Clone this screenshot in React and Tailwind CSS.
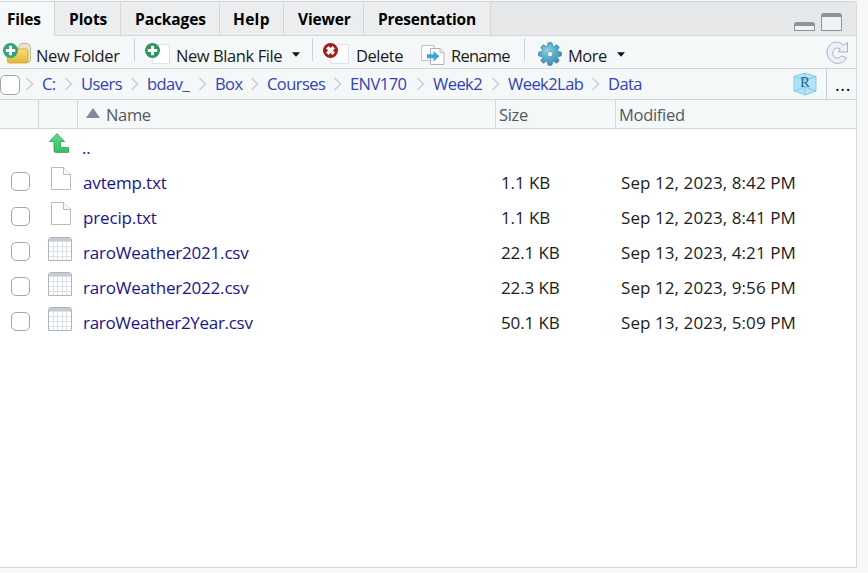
import React from "react";

const TABS = [
  { label: "Files", box: "w-[55px] pl-[7px] bg-[#f4f8f9]", track: "tracking-[-0.2px]", active: true },
  { label: "Plots", box: "w-[66px] pl-[14px] bg-[#ebedef]", track: "tracking-[-0.05px]" },
  { label: "Packages", box: "w-[99px] pl-[14px] bg-[#ebedef]", track: "tracking-[-0.1px]" },
  { label: "Help", box: "w-[64px] pl-[13px] bg-[#ebedef]", track: "tracking-[0.3px]" },
  { label: "Viewer", box: "w-[80px] pl-[14px] bg-[#ebedef]", track: "tracking-[-0.15px]" },
  { label: "Presentation", box: "w-[127px] pl-[14px] bg-[#ebedef]", track: "tracking-[-0.2px]" },
];

const CRUMBS = [
  { label: "C:", box: "w-[31px]" },
  { label: "Users", box: "w-[58px]" },
  { label: "bdav_", box: "w-[60px]" },
  { label: "Box", box: "w-[44px]" },
  { label: "Courses", box: "w-[75px]" },
  { label: "ENV170", box: "w-[75px]" },
  { label: "Week2", box: "w-[67px]" },
  { label: "Week2Lab", box: "w-[92px]" },
  { label: "Data", box: "w-[51px]" },
];

const FILES = [
  { name: "avtemp.txt", size: "1.1 KB", date: "Sep 12, 2023, 8:42 PM", kind: "txt", track: "tracking-[-0.15px]" },
  { name: "precip.txt", size: "1.1 KB", date: "Sep 12, 2023, 8:41 PM", kind: "txt", track: "tracking-[-0.15px]" },
  { name: "raroWeather2021.csv", size: "22.1 KB", date: "Sep 13, 2023, 4:21 PM", kind: "csv", track: "tracking-[-0.2px]" },
  { name: "raroWeather2022.csv", size: "22.3 KB", date: "Sep 12, 2023, 9:56 PM", kind: "csv", track: "tracking-[-0.2px]" },
  { name: "raroWeather2Year.csv", size: "50.1 KB", date: "Sep 13, 2023, 5:09 PM", kind: "csv", track: "tracking-[-0.3px]" },
];

function Caret({ className }) {
  return (
    <svg className={`shrink-0 ${className}`} width="8" height="5" viewBox="0 0 8 5">
      <path d="M0 .3H8L4 4.7Z" fill="#111" />
    </svg>
  );
}

function Separator() {
  return <div className="mb-[5px] h-[23px] w-px shrink-0 bg-[#cdd2d6]" />;
}

function NewFolderIcon() {
  return (
    <svg className="shrink-0" width="28" height="21" viewBox="0 0 28 21">
      <defs>
        <linearGradient id="folder" x1="0" y1="0" x2="0" y2="1">
          <stop offset="0" stopColor="#f9e07a" />
          <stop offset="1" stopColor="#e5b52f" />
        </linearGradient>
      </defs>
      <path d="M15 5 17 1.2Q17.500.5 18.500.5H24.500Q27.500 1.500 27.500 4.500V18L25 20Z" fill="#e8e2ce" stroke="#b9ad86" strokeWidth=".8" />
      <path d="M4.500 8Q4.500 6 6.500 6H22.500Q24.800 6 24.800 8V18.500Q24.800 20 23 20H6Q4.500 20 4.500 18.500Z" fill="url(#folder)" stroke="#caa23c" strokeWidth=".8" />
      <circle cx="7.500" cy="7.500" r="7.500" fill="#36a07c" />
      <path d="M6 2.800h3v3.200h3.200v3H9v3.200H6V9H2.800V6H6Z" fill="#fff" />
    </svg>
  );
}

function NewFileIcon() {
  return (
    <svg className="shrink-0" width="26" height="21" viewBox="0 0 26 21">
      <path d="M7.500 1.500H24.500V20.500H7.500Z" fill="#fff" stroke="#e0e3e6" />
      <circle cx="7.500" cy="7.500" r="7.500" fill="#2f955c" />
      <path d="M6 2.800h3v3.200h3.200v3H9v3.200H6V9H2.800V6H6Z" fill="#fff" />
    </svg>
  );
}

function DeleteIcon() {
  return (
    <svg className="shrink-0" width="26" height="21" viewBox="0 0 26 21">
      <path d="M7.500 1.500H25.500V20.500H7.500Z" fill="#fbfcfd" stroke="#e0e3e6" />
      <circle cx="7.500" cy="7.500" r="7.500" fill="#a51d18" />
      <path d="m4.300 4.300 6.400 6.400m0-6.400-6.400 6.400" stroke="#fff" strokeWidth="3.400" />
    </svg>
  );
}

function RenameIcon() {
  return (
    <svg className="shrink-0" width="24" height="20" viewBox="0 0 24 20">
      <path d="M.5.5h13v15H.5Z" fill="#fdfdfd" stroke="#c0c4c7" />
      <path d="M9.500 3.500h9.500l4 4v12H9.500Z" fill="#fff" stroke="#aeb2b5" />
      <path d="M19 3.500v4h4" fill="#eee" stroke="#bbb" />
      <path d="M6 9.200h6.500V6l5.800 5.300-5.800 5.200v-3.200H6Z" fill="#36a5e6" />
    </svg>
  );
}

function GearIcon() {
  return (
    <svg className="shrink-0" width="24" height="24" viewBox="-12 -12 24 24">
      <defs>
        <radialGradient id="gear" cx=".4" cy=".35" r=".7">
          <stop offset="0" stopColor="#8fd3ec" />
          <stop offset=".5" stopColor="#58abcd" />
          <stop offset="1" stopColor="#3c86a8" />
        </radialGradient>
      </defs>
      <path
        d="M-1.800-11.300H1.800L2.800-7.600 3.600-7.200 6.800-9.200 9.200-6.800 7.200-3.600 7.600-2.800 11.400-1.800V1.800L7.600 2.800 7.200 3.600 9.200 6.800 6.800 9.200 3.600 7.200 2.800 7.600 1.800 11.300H-1.800L-2.800 7.600-3.600 7.200-6.800 9.200-9.200 6.800-7.200 3.600-7.600 2.800-11.400 1.800V-1.800L-7.600-2.800-7.200-3.600-9.200-6.800-6.800-9.200-3.600-7.200-2.800-7.600Z"
        fill="url(#gear)"
        stroke="#4a8dab"
        strokeWidth=".9"
        strokeLinejoin="round"
      />
      <circle r="2.800" fill="#f4f8f9" stroke="#5a9cba" strokeWidth=".9" />
    </svg>
  );
}

function RefreshIcon() {
  return (
    <svg className="shrink-0" width="23" height="24" viewBox="0 0 23 24">
      <path
        d="M17.300 4.200 21.500 1.500V11H12.300L14.500 8C10.500 5.500 6.800 8.200 6.800 12.300C6.800 17.800 13 18.500 15.500 14.800L20.500 16.800C17.500 23 9.800 24 5.200 20C-.8 15-.2 6.500 5.500 2.700C9.300.2 14.300.7 17.300 4.200Z"
        fill="#edf0f9"
        stroke="#a9afc8"
        strokeLinejoin="round"
      />
    </svg>
  );
}

function ProjectIcon() {
  return (
    <svg className="shrink-0" width="24" height="24" viewBox="0 0 24 24">
      <path d="M12 1 23 4.500V19L12 23 1 19V4.500Z" fill="#b5e6f8" stroke="#78bdd6" strokeWidth=".8" />
      <path d="M1 4.500 12 8 23 4.500M12 8V23M1 19 12 15 23 19M12 1V8" fill="none" stroke="#72bddb" strokeWidth=".8" />
      <path d="M1 4.500 12 8V23L1 19Z" fill="#9bdcf4" opacity=".4" />
      <text x="12" y="15" textAnchor="middle" fontSize="15" fontWeight="400" fontFamily="Liberation Serif, serif" fill="#2a5f93">
        R
      </text>
    </svg>
  );
}

function UpIcon() {
  return (
    <svg className="shrink-0" width="21" height="20" viewBox="0 0 21 20">
      <defs>
        <linearGradient id="up" x1="0" y1="0" x2="0" y2="1">
          <stop offset="0" stopColor="#63d98c" />
          <stop offset="1" stopColor="#38bd68" />
        </linearGradient>
      </defs>
      <path d="M8 .6 15.500 8.500H11.500V14.500H19.500V19.400H7Q5 19.400 5 17.500V8.500H.6Z" fill="url(#up)" stroke="#35a75d" strokeWidth=".9" strokeLinejoin="round" />
    </svg>
  );
}

function TextFileIcon() {
  return (
    <svg className="shrink-0" width="24" height="24" viewBox="0 0 24 24">
      <path d="M3.500.5H15.500L22.500 7.500V22.500H3.500Z" fill="#fff" stroke="#b8babd" />
      <path d="M15.500.5V7.500H22.500" fill="#fafafa" stroke="#b8babd" />
    </svg>
  );
}

function TableFileIcon() {
  return (
    <svg className="shrink-0" width="24" height="24" viewBox="0 0 24 24">
      <path d="M.5 23.500V3Q.5.5 3 .5H21Q23.500.5 23.500 3V23.500Z" fill="#fff" stroke="#aeb4bc" />
      <path d="M1 4V3Q1 1 3 1H21Q23 1 23 3V4Z" fill="#c6ccd5" />
      <path d="M1 4.500H23M1 9.500H23M1 14.500H23M1 19.500H23M5.500 4V23M9.500 4V23M14.500 4V23M18.500 4V23" stroke="#dbe0e8" />
    </svg>
  );
}

function Checkbox({ className }) {
  return <div className={`shrink-0 rounded-[5px] border border-[#a4a6a8] bg-white ${className}`} />;
}

export default function App() {
  return (
    <div className="h-[573px] w-[868px] overflow-hidden bg-[#f5f7f9] pt-px font-['Open_Sans','Noto_Sans',sans-serif] text-[16.5px] leading-[20px] text-[#1c1c1c]">
      <div className="flex h-[567px] w-[857px] flex-col overflow-hidden rounded-tr-[4px] border-t border-r border-b border-[#d3d7da] bg-white">
        <div className="flex h-[34px] shrink-0 bg-[#e5e7e9] text-[15.5px] font-bold text-black">
          {TABS.map((t) => (
            <div
              key={t.label}
              className={`flex shrink-0 items-center border-r border-r-[#d3d7da] border-b whitespace-nowrap ${t.active ? "border-b-[#f4f8f9]" : "border-b-[#d3d7da]"} ${t.box} ${t.track}`}
            >
              {t.label}
            </div>
          ))}
          <div className="flex flex-1 items-end justify-end gap-[6px] border-b border-[#d3d7da] pr-[14px] pb-[4px]">
            <div className="h-[9px] w-[21px] rounded-t-[3px] border border-t-4 border-[#8d9396] bg-[#eff1f2]" />
            <div className="h-[18px] w-[21px] rounded-t-[3px] border border-t-4 border-[#8d9396] bg-[#eff1f2]" />
          </div>
        </div>

        <div className="flex h-[33px] shrink-0 items-center border-b border-[#d3d7da] bg-[#f4f8f9] pl-[3px] whitespace-nowrap">
          <div className="mt-[3px]">
            <NewFolderIcon />
          </div>
          <span className="mt-[7px] w-[103px] shrink-0 pl-[5px] tracking-[-0.4px]">New Folder</span>
          <Separator />
          <div className="w-[10px]" />
          <div className="mt-[2px]">
            <NewFileIcon />
          </div>
          <span className="mt-[7px] w-[121px] shrink-0 pl-[5px] tracking-[-0.42px]">New Blank File</span>
          <Caret className="mt-[5px] mr-[12px]" />
          <Separator />
          <div className="w-[10px]" />
          <div className="mt-[2px]">
            <DeleteIcon />
          </div>
          <span className="mt-[7px] w-[72px] shrink-0 pl-[7px] tracking-[-0.45px]">Delete</span>
          <div className="mt-[5px]">
            <RenameIcon />
          </div>
          <span className="mt-[7px] w-[79px] shrink-0 pl-[6px] tracking-[-0.75px]">Rename</span>
          <Separator />
          <div className="w-[13px]" />
          <div className="mt-[4px]">
            <GearIcon />
          </div>
          <span className="mt-[7px] w-[55px] shrink-0 pl-[6px] tracking-[-0.5px]">More</span>
          <Caret className="mt-[5px]" />
          <div className="flex-1" />
          <div className="mt-[2px]">
            <RefreshIcon />
          </div>
          <div className="w-[7px]" />
        </div>

        <div className="flex h-[31px] shrink-0 items-center border-b border-[#d3d7da] bg-[#f4f8f9] text-[#3243b2]">
          <Checkbox className="mt-[2px] h-[20px] w-[20px]" />
          <div className="w-[5px] shrink-0" />
          {CRUMBS.map((c) => (
            <div key={c.label} className="flex shrink-0 items-center whitespace-nowrap">
              <svg className="shrink-0" width="9" height="14" viewBox="0 0 9 14">
                <path d="M1.500 1 7.500 7 1.500 13" fill="none" stroke="#cdd1d5" strokeWidth="1.700" />
              </svg>
              <span className={`-mr-[1px] pl-[8px] tracking-[-0.55px] ${c.box}`}>{c.label}</span>
            </div>
          ))}
          <div className="flex-1" />
          <ProjectIcon />
          <div className="ml-[9px] flex h-full w-[30px] items-center justify-center border-l border-[#c5cacd] pl-[3px] text-[18px] font-medium tracking-[0.6px] text-black">...</div>
        </div>

        <div className="flex h-[29px] shrink-0 border-b border-[#d3d7da] bg-[#f4f8f9] leading-[29px] tracking-[-0.35px] text-[#53585c]">
          <div className="w-[39px] border-r border-[#d3d7da]" />
          <div className="w-[39px] border-r border-[#d3d7da]" />
          <div className="flex w-[418px] border-r border-[#d3d7da] pl-[8px]">
            <svg className="mt-[8px] mr-[6px]" width="14" height="10" viewBox="0 0 14 10">
              <path d="M7 0 14 10H0Z" fill="#80889a" />
            </svg>
            Name
          </div>
          <div className="w-[120px] border-r border-[#d3d7da] pl-[3px]">Size</div>
          <div className="pl-[3px] tracking-[-0.3px]">Modified</div>
        </div>

        <div className="flex h-[36px] shrink-0 pl-[49px] text-[#1a138c]">
          <div className="mt-[4px]">
            <UpIcon />
          </div>
          <span className="mt-[9px] ml-[12px]">..</span>
        </div>
        {FILES.map((f) => (
          <div key={f.name} className="flex h-[35px] shrink-0 pl-[11px] text-[17px] whitespace-nowrap">
            <Checkbox className="mt-[7px] h-[19px] w-[19px]" />
            <div className="mt-[2px] ml-[18px]">{f.kind === "csv" ? <TableFileIcon /> : <TextFileIcon />}</div>
            <span className={`mt-[8px] ml-[11px] w-[418px] text-[#1a138c] ${f.track}`}>{f.name}</span>
            <span className="mt-[8px] w-[120px] tracking-[-0.1px]">{f.size}</span>
            <span className="mt-[8px] tracking-[0.08px]">{f.date}</span>
          </div>
        ))}
      </div>
    </div>
  );
}
